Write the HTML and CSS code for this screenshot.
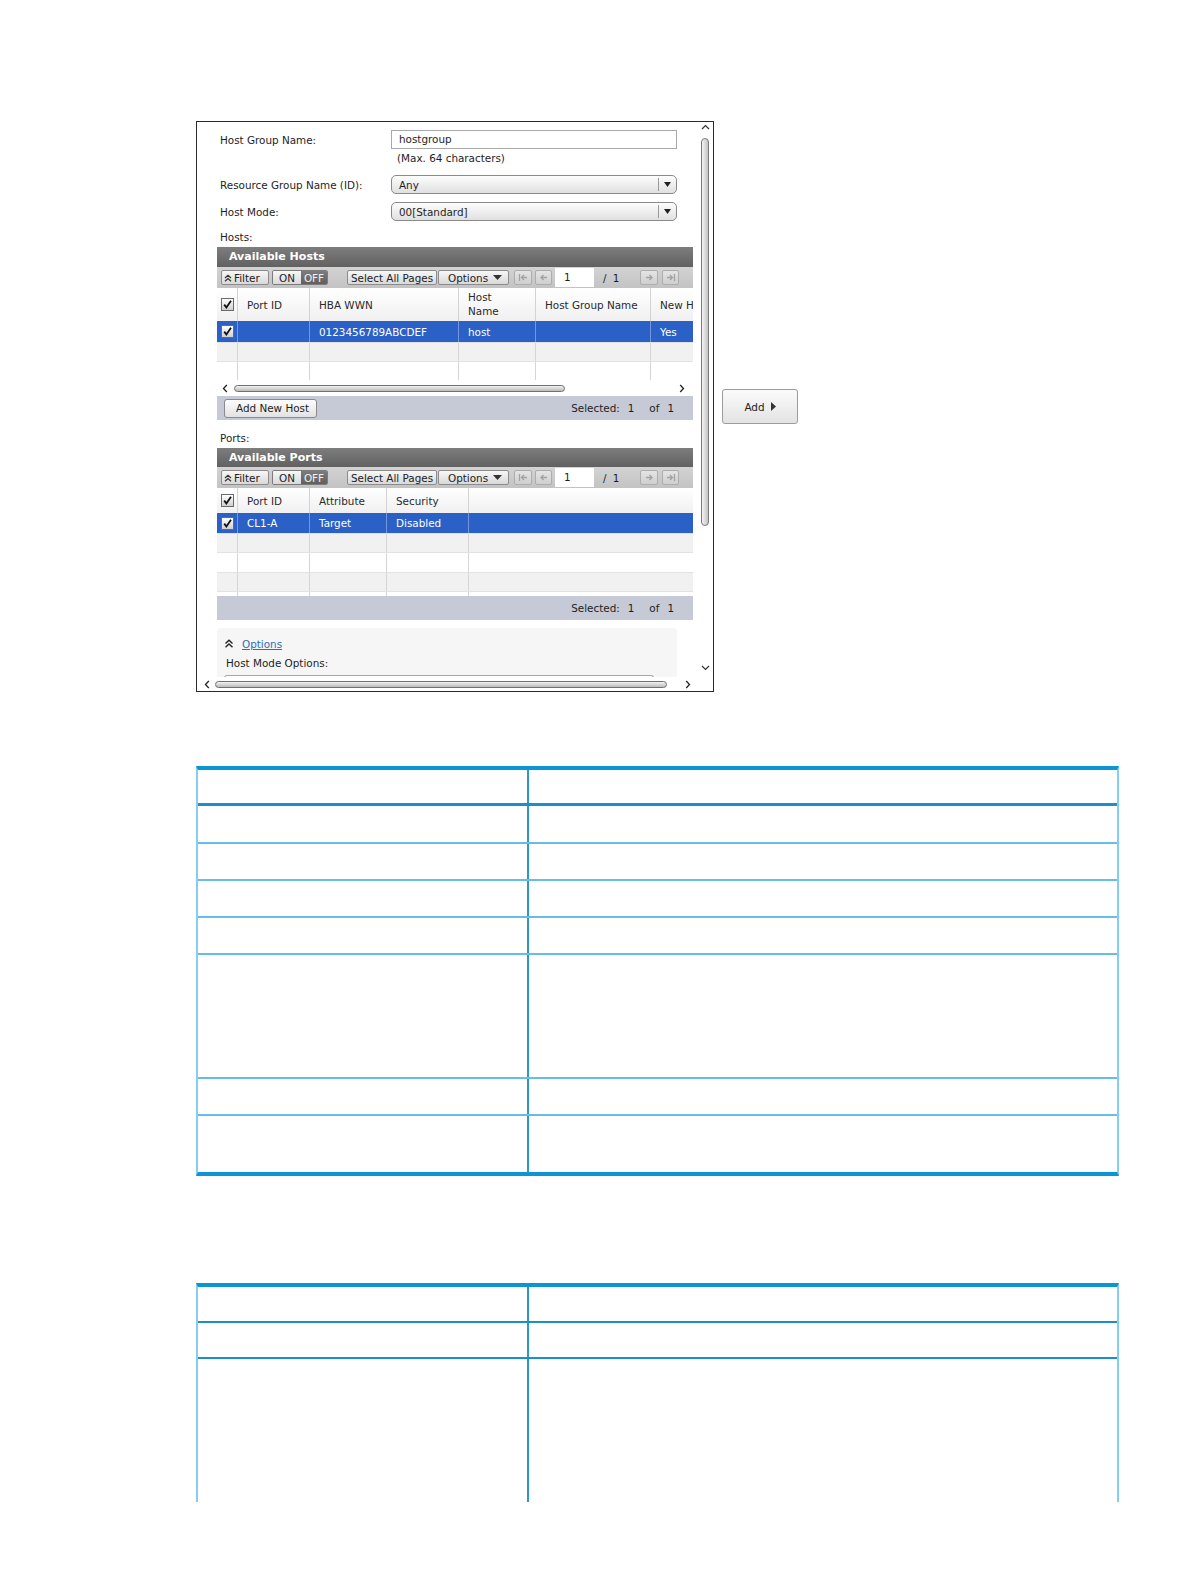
FILE: index.html
```html
<!DOCTYPE html>
<html>
<head>
<meta charset="utf-8">
<title>Create Host Groups</title>
<link rel="stylesheet" href="styles.css">
</head>
<body>
<div class="page">
  <div class="figure">
    <div class="window">
      <div class="viewport">
        <div class="content">
          <div class="frow r1"><span class="flabel">Host Group Name:</span><div class="tinput">hostgroup</div></div>
          <div class="note">(Max. 64 characters)</div>
          <div class="frow r2"><span class="flabel">Resource Group Name (ID):</span>
            <div class="select"><span class="sel-text">Any</span><span class="sel-arrow"><svg width="7" height="5" viewBox="0 0 7 5"><path d="M0 0H7L3.5 5Z" fill="#222"/></svg></span></div>
          </div>
          <div class="frow r3"><span class="flabel">Host Mode:</span>
            <div class="select"><span class="sel-text">00[Standard]</span><span class="sel-arrow"><svg width="7" height="5" viewBox="0 0 7 5"><path d="M0 0H7L3.5 5Z" fill="#222"/></svg></span></div>
          </div>

          <div class="seclabel">Hosts:</div>
          <div class="panel hosts">
            <div class="ptitle">Available Hosts</div>
            <div class="toolbar">
              <span class="tbtn filter"><svg width="8" height="8" viewBox="0 0 8 8"><path d="M1 4L4 1.2L7 4M1 7.3L4 4.5L7 7.3" fill="none" stroke="#333" stroke-width="1.2"/></svg>Filter</span>
              <span class="seg"><span class="seg-on">ON</span><span class="seg-off">OFF</span></span>
              <span class="tbtn selall">Select All Pages</span>
              <span class="tbtn opts">Options<svg width="9" height="5" viewBox="0 0 9 5"><path d="M0 0H9L4.5 5Z" fill="#333"/></svg></span>
              <span class="nbtn first"><svg width="10" height="9" viewBox="0 0 10 9"><path d="M1.5 1V8M9 4.5H3.5M6 2L3.5 4.5L6 7" fill="none" stroke="#a2a2a2" stroke-width="1.3"/></svg></span>
              <span class="nbtn prev"><svg width="9" height="9" viewBox="0 0 9 9"><path d="M8 4.5H2M4.5 2L2 4.5L4.5 7" fill="none" stroke="#a2a2a2" stroke-width="1.3"/></svg></span>
              <span class="pinput">1</span>
              <span class="pof">/ 1</span>
              <span class="nbtn next"><svg width="9" height="9" viewBox="0 0 9 9"><path d="M1 4.5H7M4.5 2L7 4.5L4.5 7" fill="none" stroke="#a2a2a2" stroke-width="1.3"/></svg></span>
              <span class="nbtn last"><svg width="10" height="9" viewBox="0 0 10 9"><path d="M1 4.5H6.5M4 2L6.5 4.5L4 7M8.5 1V8" fill="none" stroke="#a2a2a2" stroke-width="1.3"/></svg></span>
            </div>
            <div class="trow thead">
              <div class="tc cbc"><span class="cbox"><svg width="11" height="11" viewBox="0 0 11 11"><path d="M2.2 5.6L4.4 8.4L9 1.8" fill="none" stroke="#111" stroke-width="1.8"/></svg></span></div>
              <div class="tc">Port ID</div>
              <div class="tc">HBA WWN</div>
              <div class="tc two">Host<br>Name</div>
              <div class="tc">Host Group Name</div>
              <div class="tc nob">New Host</div>
            </div>
            <div class="trow tsel">
              <div class="tc cbc"><span class="cbox"><svg width="11" height="11" viewBox="0 0 11 11"><path d="M2.2 5.6L4.4 8.4L9 1.8" fill="none" stroke="#111" stroke-width="1.8"/></svg></span></div>
              <div class="tc"></div>
              <div class="tc">0123456789ABCDEF</div>
              <div class="tc">host</div>
              <div class="tc"></div>
              <div class="tc nob">Yes</div>
            </div>
            <div class="trow tr-a h19"><div class="tc"></div><div class="tc"></div><div class="tc"></div><div class="tc"></div><div class="tc"></div><div class="tc nob"></div></div>
            <div class="trow tr-b h19"><div class="tc"></div><div class="tc"></div><div class="tc"></div><div class="tc"></div><div class="tc"></div><div class="tc nob"></div></div>
            <div class="hscr">
              <svg width="6" height="9" viewBox="0 0 6 9"><path d="M4.8 1L1.5 4.5L4.8 8" fill="none" stroke="#222" stroke-width="1.3"/></svg>
              <span class="hthumb"></span>
              <svg class="hright" width="6" height="9" viewBox="0 0 6 9"><path d="M1.2 1L4.5 4.5L1.2 8" fill="none" stroke="#222" stroke-width="1.3"/></svg>
            </div>
            <div class="pfoot">
              <span class="addhost">Add New Host</span>
              <span class="seltxt"><span>Selected:</span><span class="n1">1</span><span class="of">of</span><span class="n2">1</span></span>
            </div>
          </div>

          <div class="seclabel s-ports">Ports:</div>
          <div class="panel ports">
            <div class="ptitle">Available Ports</div>
            <div class="toolbar">
              <span class="tbtn filter"><svg width="8" height="8" viewBox="0 0 8 8"><path d="M1 4L4 1.2L7 4M1 7.3L4 4.5L7 7.3" fill="none" stroke="#333" stroke-width="1.2"/></svg>Filter</span>
              <span class="seg"><span class="seg-on">ON</span><span class="seg-off">OFF</span></span>
              <span class="tbtn selall">Select All Pages</span>
              <span class="tbtn opts">Options<svg width="9" height="5" viewBox="0 0 9 5"><path d="M0 0H9L4.5 5Z" fill="#333"/></svg></span>
              <span class="nbtn first"><svg width="10" height="9" viewBox="0 0 10 9"><path d="M1.5 1V8M9 4.5H3.5M6 2L3.5 4.5L6 7" fill="none" stroke="#a2a2a2" stroke-width="1.3"/></svg></span>
              <span class="nbtn prev"><svg width="9" height="9" viewBox="0 0 9 9"><path d="M8 4.5H2M4.5 2L2 4.5L4.5 7" fill="none" stroke="#a2a2a2" stroke-width="1.3"/></svg></span>
              <span class="pinput">1</span>
              <span class="pof">/ 1</span>
              <span class="nbtn next"><svg width="9" height="9" viewBox="0 0 9 9"><path d="M1 4.5H7M4.5 2L7 4.5L4.5 7" fill="none" stroke="#a2a2a2" stroke-width="1.3"/></svg></span>
              <span class="nbtn last"><svg width="10" height="9" viewBox="0 0 10 9"><path d="M1 4.5H6.5M4 2L6.5 4.5L4 7M8.5 1V8" fill="none" stroke="#a2a2a2" stroke-width="1.3"/></svg></span>
            </div>
            <div class="trow thead">
              <div class="tc cbc"><span class="cbox"><svg width="11" height="11" viewBox="0 0 11 11"><path d="M2.2 5.6L4.4 8.4L9 1.8" fill="none" stroke="#111" stroke-width="1.8"/></svg></span></div>
              <div class="tc">Port ID</div>
              <div class="tc">Attribute</div>
              <div class="tc">Security</div>
              <div class="tc nob"></div>
            </div>
            <div class="trow tsel">
              <div class="tc cbc"><span class="cbox"><svg width="11" height="11" viewBox="0 0 11 11"><path d="M2.2 5.6L4.4 8.4L9 1.8" fill="none" stroke="#111" stroke-width="1.8"/></svg></span></div>
              <div class="tc">CL1-A</div>
              <div class="tc">Target</div>
              <div class="tc">Disabled</div>
              <div class="tc nob"></div>
            </div>
            <div class="trow tr-a h19"><div class="tc"></div><div class="tc"></div><div class="tc"></div><div class="tc"></div><div class="tc nob"></div></div>
            <div class="trow tr-b h20"><div class="tc"></div><div class="tc"></div><div class="tc"></div><div class="tc"></div><div class="tc nob"></div></div>
            <div class="trow tr-a h19"><div class="tc"></div><div class="tc"></div><div class="tc"></div><div class="tc"></div><div class="tc nob"></div></div>
            <div class="trow tr-b h5"><div class="tc"></div><div class="tc"></div><div class="tc"></div><div class="tc"></div><div class="tc nob"></div></div>
            <div class="pfoot pfoot-r">
              <span class="seltxt"><span>Selected:</span><span class="n1">1</span><span class="of">of</span><span class="n2">1</span></span>
            </div>
          </div>

          <div class="optbox">
            <div class="optlink"><svg width="10" height="9" viewBox="0 0 10 9"><path d="M1.5 4.5L5 1.3L8.5 4.5M1.5 8.2L5 5L8.5 8.2" fill="none" stroke="#222" stroke-width="1.4"/></svg><a class="olink">Options</a></div>
            <div class="hmo">Host Mode Options:</div>
            <div class="hmo-box"></div>
          </div>
        </div>
        <div class="vscroll">
          <svg class="vup" width="9" height="6" viewBox="0 0 9 6"><path d="M1 5L4.5 1.5L8 5" fill="none" stroke="#333" stroke-width="1.2"/></svg>
          <span class="vthumb"></span>
          <svg class="vdown" width="9" height="6" viewBox="0 0 9 6"><path d="M1 1L4.5 4.5L8 1" fill="none" stroke="#333" stroke-width="1.2"/></svg>
        </div>
      </div>
      <div class="hscroll">
        <svg width="6" height="9" viewBox="0 0 6 9"><path d="M4.8 1L1.5 4.5L4.8 8" fill="none" stroke="#222" stroke-width="1.3"/></svg>
        <span class="bthumb"></span>
        <svg class="bright" width="6" height="9" viewBox="0 0 6 9"><path d="M1.2 1L4.5 4.5L1.2 8" fill="none" stroke="#222" stroke-width="1.3"/></svg>
      </div>
    </div>
    <div class="add-btn">Add<svg width="5" height="9" viewBox="0 0 5 9"><path d="M0 0L5 4.5L0 9Z" fill="#333"/></svg></div>
  </div>

  <div class="dtable t1">
    <div class="drow dhead rh36"><div class="dc1"></div><div class="dc2"></div></div>
    <div class="drow rh38"><div class="dc1"></div><div class="dc2"></div></div>
    <div class="drow rh37"><div class="dc1"></div><div class="dc2"></div></div>
    <div class="drow rh37"><div class="dc1"></div><div class="dc2"></div></div>
    <div class="drow rh37"><div class="dc1"></div><div class="dc2"></div></div>
    <div class="drow rh124"><div class="dc1"></div><div class="dc2"></div></div>
    <div class="drow rh37"><div class="dc1"></div><div class="dc2"></div></div>
    <div class="drow dlast rh56"><div class="dc1"></div><div class="dc2"></div></div>
  </div>

  <div class="dtable t2">
    <div class="drow dhead rh36"><div class="dc1"></div><div class="dc2"></div></div>
    <div class="drow ddark rh36"><div class="dc1"></div><div class="dc2"></div></div>
    <div class="drow dlast rh200"><div class="dc1"></div><div class="dc2"></div></div>
  </div>
</div>
</body>
</html>
```

FILE: styles.css
```css
* { box-sizing: border-box; }
html, body { margin: 0; padding: 0; background: #fff; }

.page { padding: 121px 0 0 196px; }
.figure { display: flex; align-items: flex-start; }

.window {
  width: 518px; height: 571px;
  border: 1px solid #2a2a2a;
  display: flex; flex-direction: column;
  font-family: "DejaVu Sans", Verdana, sans-serif;
  font-size: 10.4px; color: #1e1e1e;
  background: #fff;
}
.viewport { height: 555px; display: flex; overflow: hidden; }
.content { width: 497px; padding-left: 20px; overflow: hidden; }

/* form */
.frow { display: flex; align-items: center; }
.flabel { width: 174px; padding-left: 3px; white-space: nowrap; }
.r1 { margin-top: 8px; }
.r2 { margin-top: 10px; }
.r3 { margin-top: 8px; }
.tinput {
  width: 286px; height: 19px;
  border: 1px solid #a9a9a9;
  padding-left: 7px; line-height: 17px;
}
.note { margin-top: 2px; line-height: 14px; padding-left: 180px; }
.select {
  width: 286px; height: 19px;
  border: 1px solid #8a8a8a; border-radius: 5px;
  background: linear-gradient(#fdfdfd, #e0e0e0);
  display: flex; align-items: center;
}
.sel-text { flex: 1; padding-left: 7px; }
.sel-arrow {
  width: 18px; height: 13px;
  border-left: 1px solid #9a9a9a;
  display: flex; align-items: center; justify-content: center;
}
.seclabel { margin-top: 9px; line-height: 14px; padding-left: 3px; }
.s-ports { margin-top: 11px; }

/* panels */
.panel { margin-top: 3px; width: 476px; }
.ptitle {
  height: 20px; line-height: 20px; padding-left: 12px;
  color: #fff; font-weight: bold; font-size: 11px;
  background: linear-gradient(#7d7d7d, #616161);
}
.ports .ptitle { height: 19px; line-height: 19px; }
.toolbar {
  height: 21px; display: flex; align-items: center; padding-left: 4px;
  background: linear-gradient(#d3d3d3, #c3c3c3);
}
.tbtn {
  height: 15px; border: 1px solid #8c8c8c; border-radius: 2px;
  background: linear-gradient(#f7f7f7, #d9d9d9);
  display: flex; align-items: center; white-space: nowrap; color: #222;
}
.filter { width: 48px; padding-left: 2px; }
.filter svg { margin-right: 2px; }
.seg {
  margin-left: 3px; width: 56px; height: 15px; display: flex;
  border: 1px solid #7c7c7c; border-radius: 2px; overflow: hidden;
}
.seg-on {
  width: 28px; background: linear-gradient(#f7f7f7, #d9d9d9);
  display: flex; align-items: center; justify-content: center;
}
.seg-off {
  flex: 1; background: linear-gradient(#7c7c7c, #5f5f5f); color: #f2f2f2;
  display: flex; align-items: center; justify-content: center;
}
.selall { margin-left: 19px; width: 90px; justify-content: center; }
.opts { margin-left: 1px; width: 71px; padding-left: 9px; }
.opts svg { margin-left: 5px; }
.nbtn {
  width: 18px; height: 15px; border: 1px solid #adadad; border-radius: 2px;
  background: linear-gradient(#e4e4e4, #cfcfcf);
  display: flex; align-items: center; justify-content: center;
}
.first { margin-left: 5px; }
.prev { margin-left: 3px; width: 17px; }
.pinput {
  margin-left: 3px; width: 39px; height: 19px; background: #fff;
  padding-left: 9px; line-height: 19px;
}
.pof { width: 46px; padding-left: 9px; word-spacing: 3px; }
.last { margin-left: 4px; width: 17px; }

/* grid tables */
.trow { display: grid; }
.hosts .trow { grid-template-columns: 21px 72px 149px 77px 115px 42px; }
.ports .trow { grid-template-columns: 21px 72px 77px 82px 224px; }
.tc {
  border-right: 1px solid #d3d3d3; padding-left: 9px;
  display: flex; align-items: center; white-space: nowrap; overflow: hidden;
}
.tc.nob { border-right: none; }
.tc.cbc { padding-left: 0; justify-content: center; }
.tc.two { line-height: 13.4px; }
.thead { background: linear-gradient(#ffffff, #f0f0f0); color: #2a2a2a; }
.hosts .thead { height: 33px; }
.ports .thead { height: 25px; }
.tsel { background: #2b60c6; color: #fff; }
.tsel .tc { border-right-color: #7397db; }
.hosts .tsel { height: 21px; }
.ports .tsel { height: 20px; }
.tr-a { background: #f1f1f1; border-top: 1px solid #e2e2e2; }
.tr-b { background: #fff; border-top: 1px solid #e2e2e2; }
.tr-a .tc, .tr-b .tc { border-right-color: #d6d6d6; }
.h19 { height: 19px; }
.h20 { height: 20px; }
.h5 { height: 5px; }

.cbox {
  width: 13px; height: 13px; border: 1px solid #6a6a6a;
  background: linear-gradient(#ffffff, #cfcfcf);
  display: flex; align-items: center; justify-content: center;
}

.hscr {
  height: 16px; display: flex; align-items: center; padding-left: 5px;
  background: #fff;
}
.hthumb {
  margin-left: 6px; width: 331px; height: 7px;
  border: 1px solid #707070; border-radius: 4px;
  background: linear-gradient(#f2f2f2, #bcbcbc);
}
.hright { margin-left: auto; margin-right: 8px; }

.pfoot {
  height: 24px; background: #c6cad6;
  display: flex; align-items: center; justify-content: space-between;
  padding: 0 19px 0 7px;
}
.pfoot-r { justify-content: flex-end; }
.addhost {
  height: 19px; width: 93px; border: 1px solid #8a8a8a; border-radius: 3px;
  background: linear-gradient(#fdfdfd, #e2e2e2);
  padding-left: 11px; display: flex; align-items: center;
}
.seltxt { display: flex; }
.n1 { margin-left: 8px; }
.of { margin-left: 15px; }
.n2 { margin-left: 8px; }

/* options */
.optbox {
  margin-top: 8px; width: 460px; height: 60px;
  background: #f6f6f6; border-radius: 4px 4px 0 0;
  padding: 9px 0 0 7px;
}
.optlink { display: flex; align-items: center; height: 13px; }
.optlink svg { margin-right: 8px; }
.olink { color: #2f6db5; text-decoration: underline; }
.hmo { margin-top: 7px; line-height: 13px; padding-left: 2px; }
.hmo-box {
  margin-top: 5px; width: 430px; height: 12px;
  border: 1px solid #a6a6a6; border-bottom: none; border-radius: 3px 3px 0 0;
  background: #fff;
}

/* scrollbars */
.vscroll {
  width: 19px; display: flex; flex-direction: column; align-items: flex-start;
  padding-left: 7px;
}
.vup { margin-top: 2px; }
.vthumb {
  margin-top: 8px; width: 8px; height: 388px;
  border: 1px solid #7a7a7a; border-radius: 4px;
  background: linear-gradient(90deg, #f4f4f4, #c4c4c4);
}
.vdown { margin-top: auto; margin-bottom: 6px; }
.hscroll {
  height: 14px; display: flex; align-items: center; padding-left: 7px;
}
.bthumb {
  margin-left: 5px; width: 452px; height: 7px;
  border: 1px solid #707070; border-radius: 4px;
  background: linear-gradient(#f2f2f2, #bcbcbc);
}
.bright { margin-left: 18px; }

/* add button */
.add-btn {
  margin-left: 8px; margin-top: 268px;
  width: 76px; height: 35px;
  border: 1px solid #9c9c9c; border-radius: 3px;
  background: linear-gradient(#fbfbfb, #e3e3e3);
  display: flex; align-items: center; justify-content: center;
  font-family: "DejaVu Sans", Verdana, sans-serif; font-size: 10.4px; color: #222;
}
.add-btn svg { margin-left: 6px; }

/* document tables */
.dtable {
  width: 923px;
  border-left: 2px solid #86cdef;
  border-right: 2px solid #86cdef;
}
.t1 {
  margin-top: 74px;
  border-top: 4px solid #0c95d3;
  border-bottom: 4px solid #0c95d3;
}
.t2 {
  margin-top: 107px;
  border-top: 4px solid #0c95d3;
  height: 219px; overflow: hidden;
}
.drow { display: flex; border-bottom: 2px solid #66bde8; }
.drow.dhead { border-bottom: 3px solid #1b8fc7; }
.t2 .drow.dhead { border-bottom-width: 2px; }
.drow.ddark { border-bottom: 2px solid #1b8fc7; }
.drow.dlast { border-bottom: none; }
.dc1 { width: 331px; border-right: 2px solid #2c96cd; }
.dc2 { flex: 1; }
.rh36 { height: 36px; }
.rh37 { height: 37px; }
.rh38 { height: 38px; }
.rh56 { height: 56px; }
.rh124 { height: 124px; }
.rh200 { height: 200px; }
```
